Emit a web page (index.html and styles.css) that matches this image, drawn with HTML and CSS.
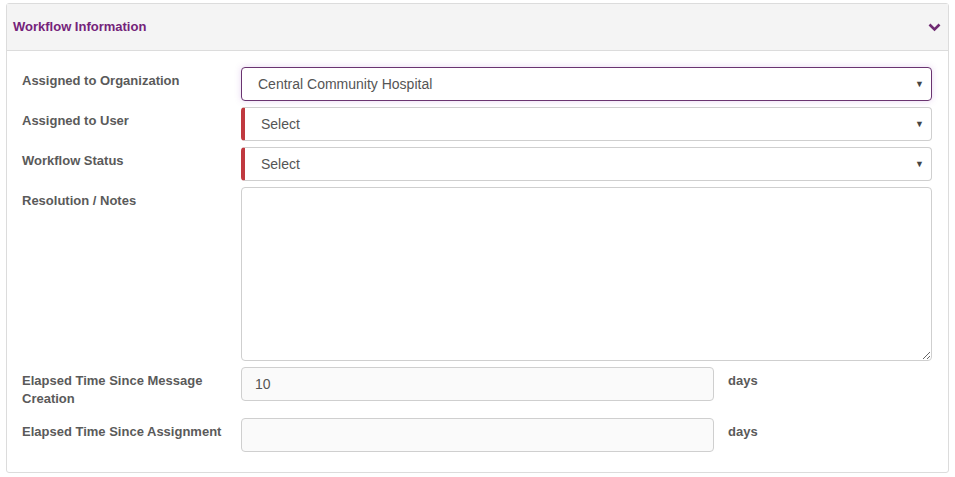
FILE: index.html
```html
<!DOCTYPE html>
<html>
<head>
<meta charset="utf-8">
<link rel="stylesheet" href="styles.css">
</head>
<body>
<div class="panel">
  <div class="panel-head">
    <span class="panel-title">Workflow Information</span>
    <svg class="chev" width="13" height="9" viewBox="0 0 13 9"><path d="M1.5 1.5 L6.5 6.5 L11.5 1.5" fill="none" stroke="#6f2a72" stroke-width="2.6"/></svg>
  </div>
  <div class="panel-body">
    <div class="row">
      <label class="lbl">Assigned to Organization</label>
      <div class="ctl"><div class="select focused"><span>Central Community Hospital</span><span class="arrow">▼</span></div></div>
    </div>
    <div class="row">
      <label class="lbl">Assigned to User</label>
      <div class="ctl"><div class="select required"><span>Select</span><span class="arrow">▼</span></div></div>
    </div>
    <div class="row">
      <label class="lbl">Workflow Status</label>
      <div class="ctl"><div class="select required"><span>Select</span><span class="arrow">▼</span></div></div>
    </div>
    <div class="row">
      <label class="lbl">Resolution / Notes</label>
      <div class="ctl"><textarea class="notes"></textarea></div>
    </div>
    <div class="row">
      <label class="lbl">Elapsed Time Since Message Creation</label>
      <div class="ctl short"><input class="num" type="text" value="10"><span class="unit">days</span></div>
    </div>
    <div class="row last">
      <label class="lbl">Elapsed Time Since Assignment</label>
      <div class="ctl short"><input class="num" type="text" value=""><span class="unit">days</span></div>
    </div>
  </div>
</div>
</body>
</html>
```
FILE: styles.css
```css
html, body {
  margin: 0;
  padding: 0;
  background: #fff;
  font-family: "Liberation Sans", Arial, sans-serif;
}
body {
  padding: 3px 6px 0 6px;
}
.panel {
  width: 941px;
  border: 1px solid #dcdcdc;
  border-radius: 3px;
  background: #fff;
}
.panel-head {
  height: 46px;
  background: #f4f4f4;
  border-bottom: 1px solid #dcdcdc;
  display: flex;
  align-items: center;
  justify-content: space-between;
  padding: 0 7px 0 6px;
}
.panel-title {
  color: #74237a;
  font-weight: bold;
  font-size: 13px;
  position: relative;
  top: -1px;
}
.chev {
  display: block;
}
.panel-body {
  padding: 16px 16px 20px 15px;
  display: flex;
  flex-direction: column;
  gap: 6px;
}
.row {
  display: flex;
  align-items: flex-start;
}
.row.last {
  margin-top: 4px;
}
.lbl {
  width: 219px;
  flex: none;
  box-sizing: border-box;
  padding: 5px 8px 0 0;
  font-size: 13px;
  line-height: 18px;
  font-weight: bold;
  color: #5a5a5a;
}
.ctl {
  flex: 1;
  display: flex;
  align-items: flex-start;
}
.select {
  flex: 1;
  height: 34px;
  box-sizing: border-box;
  border: 1px solid #cfcfcf;
  border-radius: 4px;
  display: flex;
  align-items: center;
  justify-content: space-between;
  padding: 0 7px 0 16px;
  font-size: 14px;
  color: #555;
  background: #fff;
}
.select.focused {
  border-color: #6a3470;
  box-shadow: 0 0 6px rgba(160, 90, 200, 0.25);
}
.select.required {
  border-left: 4px solid #c0393f;
  padding-left: 16px;
}
.arrow {
  font-size: 9px;
  color: #444;
}
.notes {
  flex: 1;
  height: 174px;
  box-sizing: border-box;
  border: 1px solid #cfcfcf;
  border-radius: 4px;
  margin: 0;
  resize: vertical;
  font-family: inherit;
  background: #fff;
}
.short .num {
  width: 473px;
  height: 34px;
  box-sizing: border-box;
  border: 1px solid #cfcfcf;
  border-radius: 4px;
  padding: 0 13px;
  font-family: inherit;
  font-size: 14px;
  color: #555;
  background: #fafafa;
  margin: 0;
  outline: none;
}
.unit {
  margin-left: 14px;
  padding-top: 5px;
  font-size: 13px;
  line-height: 18px;
  font-weight: bold;
  color: #5a5a5a;
}
```
